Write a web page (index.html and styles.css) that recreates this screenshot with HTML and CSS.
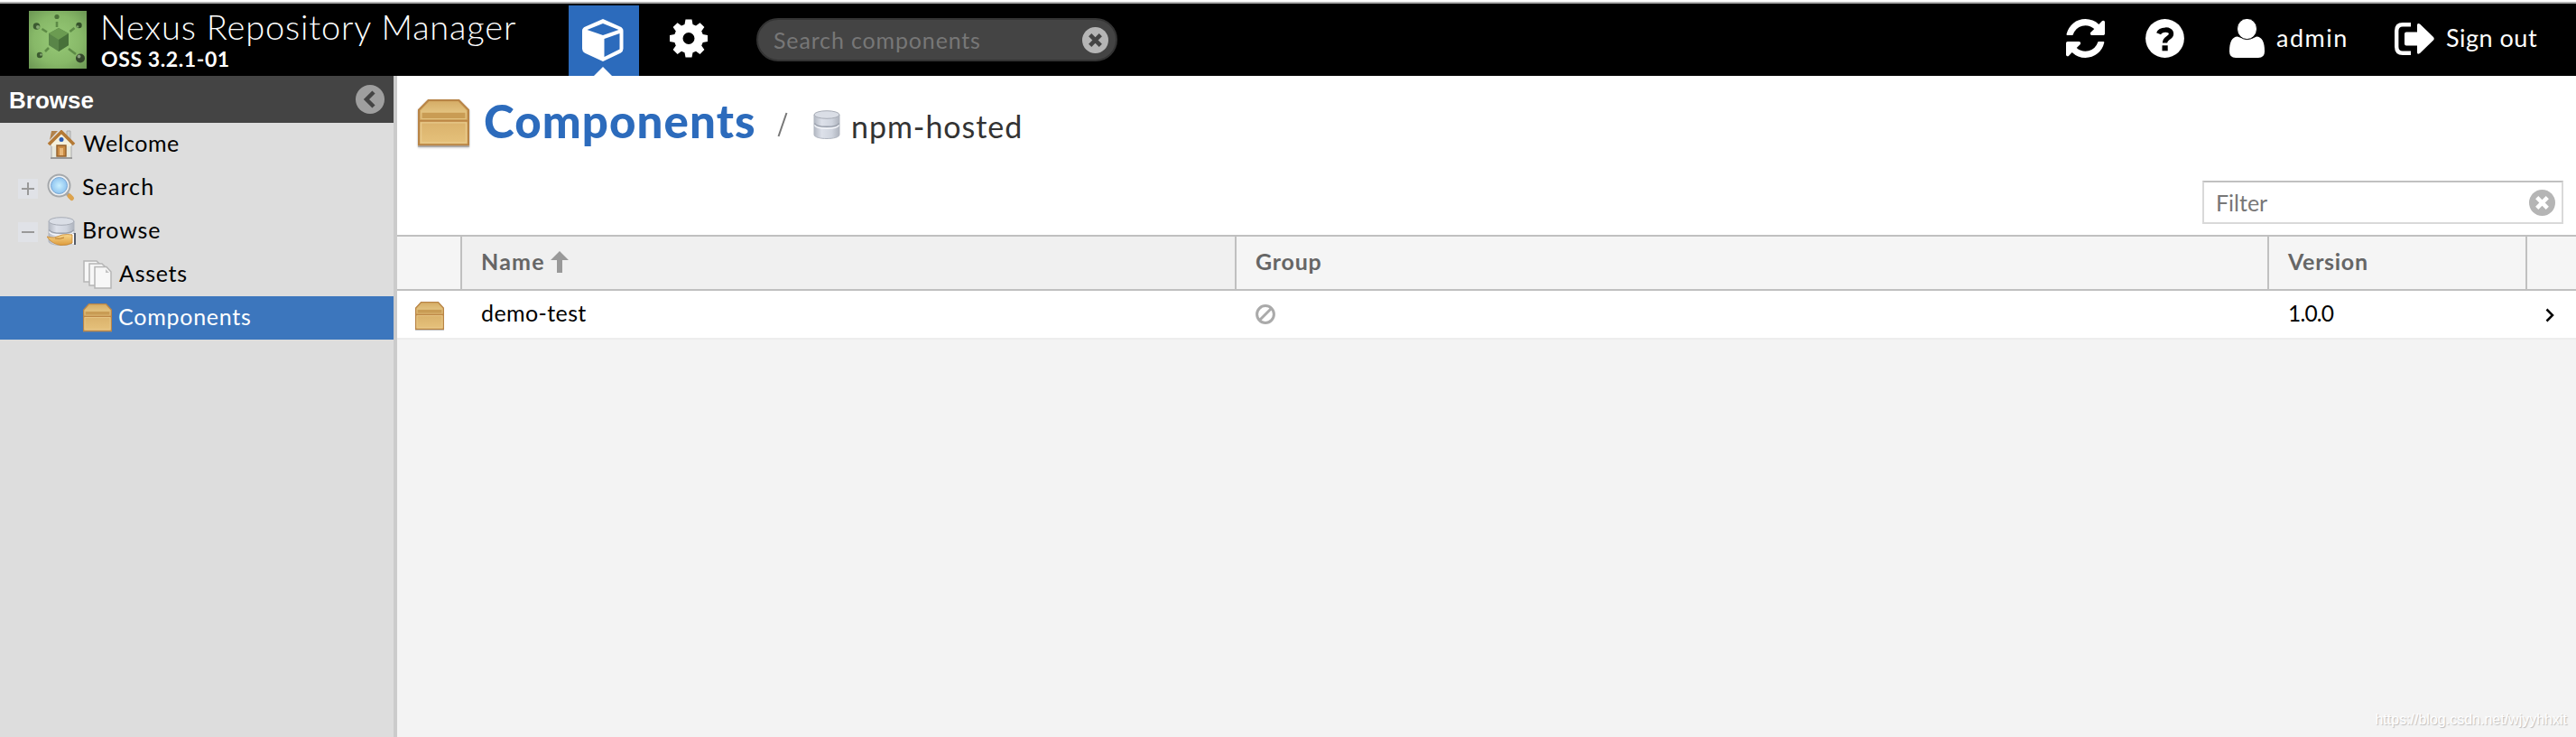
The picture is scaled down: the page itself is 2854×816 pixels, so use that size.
FILE: index.html
```html
<!DOCTYPE html>
<html lang="en">
<head>
<meta charset="utf-8">
<title>Nexus Repository Manager</title>
<link rel="stylesheet" href="styles.css">
</head>
<body>
<svg class="defs" width="0" height="0" aria-hidden="true">
  <defs>
    <linearGradient id="lid" x1="0" y1="0" x2="0" y2="1"><stop offset="0" stop-color="#d6ae68"/><stop offset=".6" stop-color="#e2c27f"/><stop offset="1" stop-color="#c99f58"/></linearGradient>
    <linearGradient id="carton" x1="0" y1="0" x2="0" y2="1"><stop offset="0" stop-color="#cfa35c"/><stop offset="1" stop-color="#e6c27c"/></linearGradient>
    <linearGradient id="metal" x1="0" y1="0" x2="1" y2="0"><stop offset="0" stop-color="#b3b8c2"/><stop offset=".3" stop-color="#dde1ea"/><stop offset=".7" stop-color="#cfd4de"/><stop offset="1" stop-color="#aeb3bd"/></linearGradient>
    <radialGradient id="lens"><stop offset="0" stop-color="#c8efff"/><stop offset="1" stop-color="#8fc4f0"/></radialGradient>
    <radialGradient id="leaf" r=".7"><stop offset="0" stop-color="#97ca77"/><stop offset=".6" stop-color="#87b868"/><stop offset="1" stop-color="#6b9653"/></radialGradient>
    <linearGradient id="hand" x1="0" y1="0" x2="0" y2="1"><stop offset="0" stop-color="#f8d78d"/><stop offset="1" stop-color="#dd9b3c"/></linearGradient>
    <symbol id="box" viewBox="0 0 32 32">
      <path d="M0 31h32v1H0z" fill="#8a8a8a" opacity=".5"/>
      <path d="M6.500.6h19L31.400 7v23.400H.6V7z" fill="url(#carton)" stroke="#b88446" stroke-width="1.200"/>
      <path d="M7 1.500h18L30.300 7.500v6H1.700v-6z" fill="url(#lid)"/>
      <path d="M2.200 8.500h27.600v4.500H2.200z" fill="#c99c54" stroke="#e3c280" stroke-width=".7"/>
      <path d="M.6 14.400h30.800" stroke="#bd8746" stroke-width="1.200"/>
      <path d="M2 15.600h28v13.200H2z" fill="none" stroke="#e8c98b" stroke-width=".8"/>
    </symbol>
    <symbol id="clear" viewBox="0 0 28 28">
      <circle cx="14" cy="14" r="14" fill="#b5b5b5"/>
      <path d="M8.400 8.400l11.200 11.200m0-11.200L8.400 19.600" stroke="var(--cross)" stroke-width="4.400"/>
    </symbol>
    <symbol id="db" viewBox="0 0 32 32">
      <path d="M2 5v22c0 6 28 6 28 0V5z" fill="url(#metal)" stroke="#b0b5bf"/>
      <ellipse cx="16" cy="5" rx="14" ry="4.300" fill="#dadee6" stroke="#a7acb6"/>
      <path d="M2.500 14.500c2 5 25 5 27 0" fill="none" stroke="#989eaa" stroke-width="1.300"/>
      <path d="M2.500 16.500c2 5 25 5 27 0" fill="none" stroke="#f3f5f9" stroke-width="1.500"/>
    </symbol>
  </defs>
</svg>

<header class="topbar">
  <svg class="logo" viewBox="0 0 64 64">
    <rect width="64" height="64" fill="url(#leaf)"/>
    <g stroke="#5d8a46" stroke-width="2.600"><path d="M31 18v-6M20 23.500l-5.500-3.500M45.500 23l5-4M22 41l-4 4M44 42l8 6"/></g>
    <path d="M33 19l11 6v13l-11 7-11-7V25z" fill="#598548"/>
    <path d="M33 19l11 6-11 7-11-7z" fill="#6b9b51"/><path d="M33 32l11-7v13l-11 7z" fill="#48713a"/>
    <circle cx="31" cy="6.500" r="2.600" fill="#4c7239"/>
    <circle cx="8.500" cy="17" r="3.800" fill="#3c5a30"/><circle cx="10" cy="18" r="2" fill="#86a873"/>
    <circle cx="55.500" cy="16" r="3.200" fill="#34502a"/><circle cx="54" cy="17.500" r="1.300" fill="#7da268"/>
    <circle cx="12" cy="49" r="3.200" fill="#3c5a30"/><circle cx="13.500" cy="48.500" r="1.300" fill="#86a873"/>
    <circle cx="57" cy="52.500" r="5" fill="#34472b"/><circle cx="55.500" cy="50.500" r="1.900" fill="#879b7c"/>
  </svg>
  <div class="brand">
    <span class="brand-name">Nexus Repository Manager</span>
    <span class="brand-version">OSS 3.2.1-01</span>
  </div>
  <nav class="modes">
    <span class="mode mode-active">
      <svg width="46" height="47" viewBox="0 0 46 47"><path d="M23 0L42 8.500Q45.500 10 45.500 13v20q0 3-3 4.800L23 47 3 37.800Q0 36 0 33V13q0-3 3.500-4.500z" fill="#fff"/><path d="M23 5l17.500 7L23 18 5.500 12z" fill="#2c6bbc"/><path d="M24.500 22l17-6v17.500l-17 8.500z" fill="#2c6bbc"/></svg>
    </span>
    <span class="mode">
      <svg width="42" height="43" viewBox="0 0 42 42"><path d="M17.500 0h7l1 5.400 3.500 1.500 4.500-3.200 4.900 4.900-3.200 4.500 1.500 3.500 5.300 1v7l-5.300.9-1.500 3.600 3.200 4.400-4.900 4.900-4.500-3.200-3.500 1.500-1 5.300h-7l-1-5.300-3.500-1.500-4.400 3.200-5-4.900 3.200-4.400-1.400-3.600L0 24.600v-7l5.400-1 1.400-3.500-3.200-4.500 5-4.900L13 6.900l3.500-1.500zM21 14.500a6.500 6.500 0 100 13 6.500 6.500 0 000-13z" fill="#fff"/></svg>
    </span>
  </nav>
  <div class="search"><span>Search components</span><svg class="clear on-dark" viewBox="0 0 28 28"><use href="#clear"/></svg></div>
  <div class="actions">
    <svg class="refresh" width="43" height="43" viewBox="0 0 1536 1536"><path fill="#fff" d="M1511 928q0 5-1 7-64 268-268 434.500T764 1536q-146 0-282.500-55T238 1324l-129 129q-19 19-45 19t-45-19-19-45V960q0-26 19-45t45-19h448q26 0 45 19t19 45-19 45l-137 137q71 66 161 102t187 36q134 0 250-65t186-179q11-17 53-117 8-23 30-23h192q13 0 22.500 9.500t9.500 22.500zm25-800v448q0 26-19 45t-45 19h-448q-26 0-45-19t-19-45 19-45l138-138Q969 256 768 256q-134 0-250 65T332 500q-11 17-53 117-8 23-30 23H50q-13 0-22.500-9.500T18 608v-7q65-268 270-434.500T768 0q146 0 284 55.500T1297 212l130-129q19-19 45-19t45 19 19 45z"/></svg>
    <svg class="help" width="43" height="43" viewBox="0 0 43 43"><circle cx="21.500" cy="21.500" r="21.400" fill="#fff"/><path d="M14.600 16.200c2-5.200 13.700-6 13.900.2.100 5-7 4-7 10.100" fill="none" stroke="#000" stroke-width="5.300"/><path d="M18.500 29.300h6.200v6h-6.200z"/></svg>
    <svg class="user" width="39" height="43" viewBox="0 0 39 43"><path d="M9 19.600Q0 20 0 36q0 7 7 7h25q7 0 7-7 0-16-9-16.400-9 6-21 0z" fill="#fff"/><ellipse cx="19.500" cy="11" rx="11" ry="11.600" fill="#fff" stroke="#000" stroke-width="1"/></svg>
    <span class="label admin">admin</span>
    <svg class="exit" width="44" height="36" viewBox="0 0 44 36"><path d="M18 2.200H9q-6.800 0-6.800 7v17.600q0 7 6.800 7h9" fill="none" stroke="#fff" stroke-width="4.400"/><path d="M13 10.500h12V3q0-3 3-1.500l15 14.500q1.500 2 0 3.500L28 34q-3 2-3-1v-7.500H13q-2 0-2-2v-11q0-2 2-2z" fill="#fff"/></svg>
    <span class="label signout">Sign out</span>
  </div>
</header>

<div class="workspace">
  <aside class="sidebar">
    <div class="sidebar-head"><span>Browse</span><svg width="32" height="32" viewBox="0 0 32 32"><circle cx="16" cy="16" r="16" fill="#9f9f9f"/><path d="M20 8l-8 8 8 8" fill="none" stroke="#444" stroke-width="4.500"/></svg></div>
    <ul class="tree">
      <li><i class="toggle-gap"></i>
        <svg class="ico" viewBox="0 0 32 32"><path d="M22 1h4v10h-4z" fill="#ccd0d0" stroke="#aaa"/><path d="M5 13h22v18H5z" fill="#e8e9dd" stroke="#aaa"/><path d="M5 1h7L3 11z" fill="#b2824b"/><path d="M16 3l11 12v3H5v-3z" fill="#f4f0dc"/><path d="M2 16L16 2l14 14" fill="none" stroke="#b47935" stroke-width="3.600"/><circle cx="16" cy="10.500" r="2.500" fill="#2859b5"/><path d="M11 17h10v12H11z" fill="#c98b43" stroke="#94602a" stroke-width="1.400"/><path d="M14 20h4v8h-4z" fill="#e8b778"/><path d="M4 30h24v2H4z" fill="#999"/></svg>
        <span class="w-welcome">Welcome</span></li>
      <li><i class="toggle"><svg viewBox="0 0 22 22"><path d="M4 11h14M11 4v14" stroke="#999" stroke-width="2"/></svg></i>
        <svg class="ico" viewBox="0 0 32 32"><path d="M22 22l6 6" stroke="#a4a4a4" stroke-width="4"/><path d="M25 25l2.500 2.500" stroke="#dda34d" stroke-width="5" stroke-linecap="round"/><circle cx="13.500" cy="13.500" r="12" fill="#eef1f3" stroke="#a5a8ab" stroke-width="2"/><circle cx="13.500" cy="13.500" r="9" fill="url(#lens)" stroke="#78a5d2"/></svg>
        <span class="w-search">Search</span></li>
      <li><i class="toggle"><svg viewBox="0 0 22 22"><path d="M4 11h14" stroke="#999" stroke-width="2"/></svg></i>
        <svg class="ico" viewBox="0 0 32 32"><use href="#db"/><path d="M30 18h2v13h-2z" fill="#555c69"/><path d="M28 19h2v11h-2z" fill="#fff"/><path d="M0 22q5 1 8 1l9-3q6-1 11 0v9q-6 3-13 2.500Q5 30 0 22z" fill="url(#hand)" stroke="#c8872e" stroke-width=".8"/><path d="M9 24q6 1 10-1" fill="none" stroke="#b87b2c"/></svg>
        <span class="w-browse">Browse</span></li>
      <li class="child">
        <svg class="ico" viewBox="0 0 32 32"><g stroke="#b5b5b5" stroke-width="1.500" fill="#f7f7f7"><path d="M1 1h14l5 5v18H1z"/><path d="M7 4h14l4 4v20H7z"/><path d="M13 7.500h13l5 5.500v18H13z"/></g><path d="M25 10l4 4h-4z" fill="#c3c3c3"/></svg>
        <span class="w-assets">Assets</span></li>
      <li class="child selected"><svg class="ico" viewBox="0 0 32 32"><use href="#box"/></svg><span class="w-components">Components</span></li>
    </ul>
  </aside>

  <main class="content">
    <div class="crumbs">
      <svg class="crumb-box" viewBox="0 0 32 32" preserveAspectRatio="none"><use href="#box"/></svg>
      <h1>Components</h1>
      <svg class="slash" viewBox="0 0 12 28"><path d="M10.500 1L1.500 27" stroke="#777" stroke-width="2"/></svg>
      <svg class="crumb-db" viewBox="0 0 32 32"><use href="#db"/></svg>
      <span class="repo">npm-hosted</span>
    </div>
    <div class="toolbar"><div class="filter"><span>Filter</span><svg class="clear on-light" viewBox="0 0 28 28"><use href="#clear"/></svg></div></div>
    <div class="grid grid-head">
      <div></div>
      <div class="sorted"><span class="h-name">Name</span><svg width="20" height="24" viewBox="0 0 20 24"><path d="M10 0l10 10h-7v14H7V10H0z" fill="#999"/></svg></div>
      <div><span class="h-group">Group</span></div>
      <div><span class="h-version">Version</span></div>
      <div></div>
    </div>
    <div class="grid grid-row">
      <div class="cell-icon"><svg class="ico" viewBox="0 0 32 32"><use href="#box"/></svg></div>
      <div><span class="c-name">demo-test</span></div>
      <div><svg class="none" width="22" height="22" viewBox="0 0 22 22"><g fill="none" stroke="#aaa" stroke-width="3"><circle cx="11" cy="11" r="9.400"/><path d="M17.500 4.500l-13 13"/></g></svg></div>
      <div><span class="c-version">1.0.0</span></div>
      <div class="cell-go"><svg width="10" height="16" viewBox="0 0 10 16"><path d="M1.500 1.500L8 8l-6.500 6.500" fill="none" stroke="#000" stroke-width="2.500"/></svg></div>
    </div>
    <footer class="watermark">https://blog.csdn.net/wjyyhhxit</footer>
  </main>
</div>
</body>
</html>
```
FILE: styles.css
```css
* { box-sizing: border-box; }
body { margin: 0; width: 2854px; height: 816px; overflow: hidden; font: 25px Lato, sans-serif; color: #000; background: #fff; display: flex; flex-direction: column; }
svg { display: block; flex: none; }
.defs { position: absolute; }
span, h1 { white-space: nowrap; }

.topbar { height: 84px; flex: none; display: flex; align-items: flex-start; background: #000; border-top: 2px solid #fff; box-shadow: inset 0 2px #b0b0b0; }
.logo { width: 64px; height: 64px; margin: 10px 0 0 32px; }
.brand { display: flex; flex-direction: column; width: 534px; padding-left: 15px; color: #fff; }
.brand-name { font-size: 38px; font-weight: 300; line-height: 40px; margin-top: 7px; letter-spacing: .83px; }
.brand-version { font-size: 23px; font-weight: 700; line-height: 24px; margin-top: 4px; padding-left: 1px; letter-spacing: .6px; }
.modes { display: flex; height: 78px; margin-top: 4px; }
.mode { width: 78px; display: flex; justify-content: center; padding-top: 15px; }
.mode + .mode { width: 110px; }
.mode-active { position: relative; padding-right: 2px; background: #2c6bbc; }
.mode-active::after { content: ""; position: absolute; left: 28px; bottom: 0; border: 10px solid transparent; border-top: 0; border-bottom-color: #fff; }
.search { width: 400px; height: 48px; margin: 18px 0 0 20px; padding: 0 8px 0 17px; border: 2px solid #333; border-radius: 24px; background: #444; color: #777; display: flex; align-items: center; justify-content: space-between; line-height: 44px; letter-spacing: .85px; }
.clear { width: 29px; height: 29px; }
.on-dark { --cross: #444; }
.on-light { --cross: #fff; }
.actions { display: flex; margin: 19px 44px 0 auto; color: #fff; }
.help { margin-left: 45px; }
.user { margin-left: 50px; }
.label { font-size: 27px; line-height: 42px; }
.admin { width: 80px; margin-left: 13px; letter-spacing: 1.5px; }
.exit { margin: 4px 0 0 51px; }
.signout { width: 100px; margin-left: 13px; letter-spacing: .5px; }

.workspace { flex: 1; display: flex; min-height: 0; }
.sidebar { width: 440px; border-right: 4px solid #cbcbcb; background: #ddd; }
.sidebar-head { height: 52px; padding: 0 10px 0 10px; background: #444; color: #fff; font: 700 26px "Liberation Sans", sans-serif; display: flex; align-items: center; justify-content: space-between; }
.sidebar-head span { padding-top: 2px; }
.tree { list-style: none; margin: 0; padding: 0; }
.tree li { height: 48px; padding-left: 20px; display: flex; align-items: center; }
.tree span { margin-left: 7px; line-height: 44px; padding-bottom: 4px; }
.tree .child { padding-left: 92px; }
.tree .selected { background: #3c76bd; color: #fff; }
.tree .w-welcome { margin-left: 8px; letter-spacing: .5px; }
.w-search { letter-spacing: 1.1px; }
.w-browse { letter-spacing: .9px; }
.tree .w-assets { margin-left: 8px; letter-spacing: .7px; }
.w-components { letter-spacing: .75px; }
.toggle, .toggle-gap { width: 22px; height: 22px; margin-right: 10px; }
.toggle { background: #e0e2e7; margin-top: 2px; }
.ico { width: 32px; height: 32px; }

.content { flex: 1; display: flex; flex-direction: column; background: #f3f3f3; }
.crumbs { height: 104px; padding-left: 23px; display: flex; align-items: flex-start; background: #fff; }
.crumb-box { width: 57px; height: 53px; margin-top: 26px; filter: drop-shadow(0 1px 1px rgba(0, 0, 0, .3)); }
h1 { width: 300px; margin: 20px 0 0 16px; font-size: 51px; line-height: 60px; font-weight: 900; letter-spacing: 1.1px; color: #2c6bbc; }
.slash { width: 12px; height: 28px; margin: 40px 0 0 25px; }
.crumb-db { width: 32px; height: 32px; margin: 38px 0 0 27px; }
.repo { margin: 36px 0 0 11px; font-size: 34px; line-height: 40px; letter-spacing: .95px; color: #333; }
.toolbar { height: 72px; padding: 12px 14px 0; background: #fff; display: flex; justify-content: flex-end; }
.filter { width: 400px; height: 48px; padding: 0 7px 0 13px; border: 2px solid #d9d9d9; border-top-color: #c0c0c0; color: #777; display: flex; align-items: center; justify-content: space-between; }
.grid { display: grid; grid-template-columns: 72px 858px 1144px 286px 54px; }
.grid > div { display: flex; align-items: center; padding-left: 21px; }
.grid-head { height: 62px; border: solid #c0c0c0; border-width: 2px 0; background: #f5f5f5; color: #666; font-weight: 700; }
.grid-head > div { border-right: 2px solid #c0c0c0; }
.grid-head > div:last-child { border-right: 0; }
.grid-head span { padding-bottom: 5px; }
.grid-head svg { margin-left: 6px; margin-bottom: 2px; }
.h-name { letter-spacing: 1.2px; }
.h-group { letter-spacing: .8px; }
.h-version { letter-spacing: .7px; }
.sorted { background: #f0f0f0; }
.grid-row { height: 54px; background: #fff; border-bottom: 2px solid #ededed; }
.grid-row > div { padding-left: 21px; }
.grid-row span { padding-bottom: 4px; }
.c-name { letter-spacing: .4px; }
.c-version { font-size: 24.5px; letter-spacing: -.8px; }
.grid-row .cell-icon { padding-left: 20px; padding-top: 4px; }
.grid-row .cell-go { padding: 2px 0 0 20px; }
.watermark { margin: auto 10px 10px auto; font: 16px "Liberation Sans", sans-serif; color: #fff; text-shadow: 1px 1px 1px #bbb; }
```
